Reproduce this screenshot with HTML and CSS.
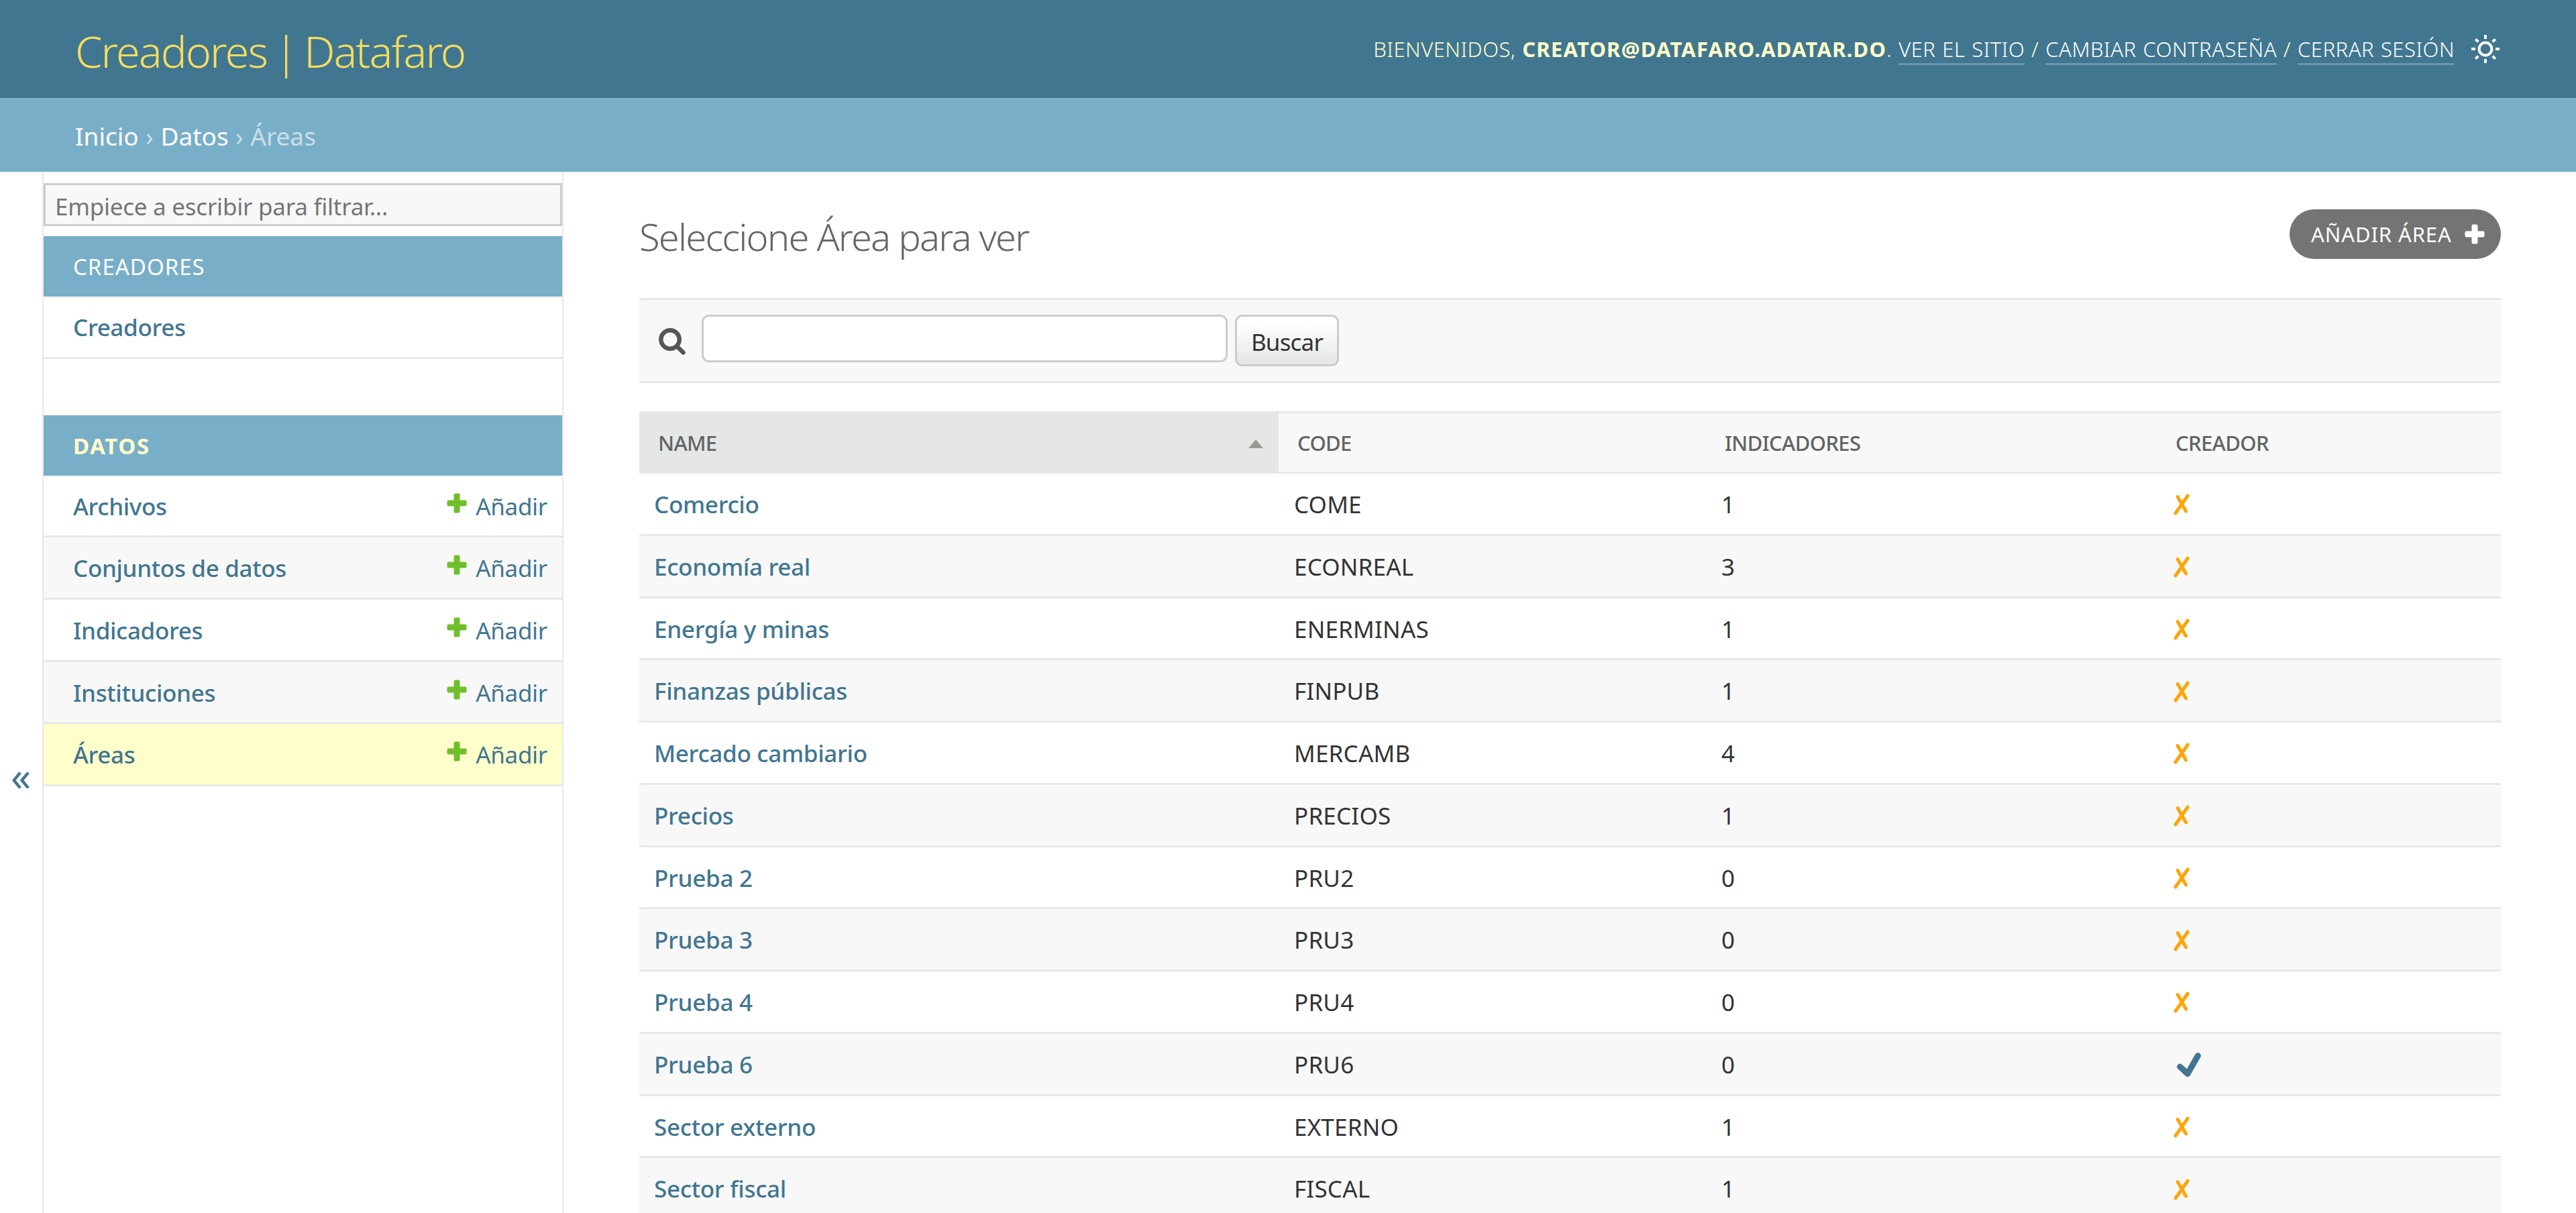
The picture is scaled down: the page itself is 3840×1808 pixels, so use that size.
FILE: index.html
```html
<!DOCTYPE html>
<html lang="es">
<head>
<meta charset="utf-8">
<title>Seleccione Área para ver | Datafaro</title>
<link rel="stylesheet" href="styles.css">
</head>
<body>
<svg class="defs" aria-hidden="true">
  <symbol id="plus" viewBox="0 0 30 30"><path d="M12.500 2.500h5v10h10v5h-10v10h-5v-10h-10v-5h10z" fill="currentColor" stroke="currentColor" stroke-width="4" stroke-linejoin="round"/></symbol>
  <symbol id="no" viewBox="0 0 24 32"><path d="M6.2 4.5 18.6 26M21.2 3 3 29" stroke="currentColor" stroke-width="5" stroke-linecap="round"/></symbol>
  <symbol id="yes" viewBox="0 0 36 36"><path d="M4.6 21 16 31.4 31.4 4.6" fill="none" stroke="currentColor" stroke-width="9" stroke-linecap="round" stroke-linejoin="round"/></symbol>
</svg>

<header class="header">
  <h1 class="brand">Creadores | Datafaro</h1>
  <div class="user-tools">
    <span>Bienvenidos, <strong>creator@datafaro.adatar.do</strong>. <a>Ver el sitio</a> / <a>Cambiar contraseña</a> / <a>Cerrar sesión</a></span>
    <svg class="sun" viewBox="0 0 42 42"><circle cx="21" cy="21" r="9.4"/><path d="M21 0v6M21 36V42M0 21h6M36 21H42M6.300 6.300l4 4M31.700 31.700l4 4M6.300 35.700l4-4M31.700 10.300l4-4"/></svg>
  </div>
</header>

<nav class="breadcrumbs"><a>Inicio</a> › <a>Datos</a> › Áreas</nav>

<div class="main">
  <button class="toggle">«</button>
  <aside class="sidebar">
    <input class="filter" type="text" placeholder="Empiece a escribir para filtrar...">
    <section class="module">
      <h2 class="caption">Creadores</h2>
      <div class="item"><a class="model">Creadores</a></div>
    </section>
    <section class="module">
      <h2 class="caption current">Datos</h2>
      <div class="item"><a class="model">Archivos</a><a class="add"><svg><use href="#plus"/></svg>Añadir</a></div>
      <div class="item"><a class="model">Conjuntos de datos</a><a class="add"><svg><use href="#plus"/></svg>Añadir</a></div>
      <div class="item"><a class="model">Indicadores</a><a class="add"><svg><use href="#plus"/></svg>Añadir</a></div>
      <div class="item"><a class="model">Instituciones</a><a class="add"><svg><use href="#plus"/></svg>Añadir</a></div>
      <div class="item selected"><a class="model">Áreas</a><a class="add"><svg><use href="#plus"/></svg>Añadir</a></div>
    </section>
  </aside>

  <main class="content">
    <div class="title-row">
      <h1 class="title">Seleccione Área para ver</h1>
      <a class="add-button">Añadir Área<svg><use href="#plus"/></svg></a>
    </div>
    <form class="search">
      <svg class="lens" viewBox="0 0 40 40"><circle cx="17" cy="17" r="13.700"/><path d="M27 27l9.500 9.500"/></svg>
      <input class="query" type="text">
      <button class="submit" type="button">Buscar</button>
    </form>
    <div class="results">
      <div class="row head">
        <div class="sorted">Name<i class="arrow"></i></div><div>Code</div><div>Indicadores</div><div>Creador</div>
      </div>
      <div class="row"><a>Comercio</a><span>COME</span><span>1</span><svg class="no"><use href="#no"/></svg></div>
      <div class="row"><a>Economía real</a><span>ECONREAL</span><span>3</span><svg class="no"><use href="#no"/></svg></div>
      <div class="row"><a>Energía y minas</a><span>ENERMINAS</span><span>1</span><svg class="no"><use href="#no"/></svg></div>
      <div class="row"><a>Finanzas públicas</a><span>FINPUB</span><span>1</span><svg class="no"><use href="#no"/></svg></div>
      <div class="row"><a>Mercado cambiario</a><span>MERCAMB</span><span>4</span><svg class="no"><use href="#no"/></svg></div>
      <div class="row"><a>Precios</a><span>PRECIOS</span><span>1</span><svg class="no"><use href="#no"/></svg></div>
      <div class="row"><a>Prueba 2</a><span>PRU2</span><span>0</span><svg class="no"><use href="#no"/></svg></div>
      <div class="row"><a>Prueba 3</a><span>PRU3</span><span>0</span><svg class="no"><use href="#no"/></svg></div>
      <div class="row"><a>Prueba 4</a><span>PRU4</span><span>0</span><svg class="no"><use href="#no"/></svg></div>
      <div class="row"><a>Prueba 6</a><span>PRU6</span><span>0</span><svg class="yes"><use href="#yes"/></svg></div>
      <div class="row"><a>Sector externo</a><span>EXTERNO</span><span>1</span><svg class="no"><use href="#no"/></svg></div>
      <div class="row"><a>Sector fiscal</a><span>FISCAL</span><span>1</span><svg class="no"><use href="#no"/></svg></div>
    </div>
  </main>
</div>
</body>
</html>
```

FILE: styles.css
```css
* { box-sizing: border-box; }

html, body { height: 100%; }

body {
  margin: 0;
  display: flex;
  flex-direction: column;
  overflow: hidden;
  background: #fff;
  color: #333;
  font: 380 35px/1.362 "Noto Sans", "Open Sans", sans-serif;
}

h1, h2 { margin: 0; }
.defs { position: absolute; width: 0; height: 0; }

/* Header */
.header {
  flex: none;
  height: 146px;
  padding: 0 112px;
  display: flex;
  align-items: center;
  justify-content: space-between;
  background: #417690;
  color: #ffc;
}
.brand {
  padding-top: 7px;
  font-size: 65px;
  font-weight: 300;
  letter-spacing: -1.950px;
  word-spacing: -4px;
  color: #f5dd5d;
}
.user-tools {
  display: flex;
  align-items: center;
  gap: 25px;
  font-size: 31px;
  font-weight: 300;
  letter-spacing: 0.500px;
  word-spacing: 1.300px;
  text-transform: uppercase;
}
.user-tools strong { font-weight: 700; letter-spacing: 1.200px; }
.user-tools a {
  color: #fff;
  border-bottom: 3px solid #6a97ae;
}
.sun {
  width: 42px;
  height: 42px;
  margin-right: 2px;
  fill: none;
  stroke: #fff;
  stroke-width: 4;
}

.breadcrumbs {
  flex: none;
  height: 110px;
  padding: 3px 112px 0;
  background: #79aec8;
  color: #c9dfe8;
  font-size: 37px;
  line-height: 108px;
  word-spacing: 1px;
}
.breadcrumbs a { color: #fff; }

/* Page body */
.main { flex: 1; min-height: 0; display: flex; }

.toggle {
  width: 63px;
  padding: 247px 1px 0 0;
  border: 0;
  background: none;
  color: #417690;
  font: 400 60px/1 "Noto Sans", sans-serif;
}

.sidebar {
  width: 777px;
  padding-top: 17px;
  border: solid #e8e8e8;
  border-width: 0 2px;
}
.filter {
  display: block;
  width: 100%;
  height: 64px;
  margin-bottom: 15px;
  padding: 4px 14px 0;
  border: 3px solid #ccc;
  background: #f8f8f8;
  font: 380 35px "Noto Sans", sans-serif;
  letter-spacing: -0.250px;
}
.filter::placeholder { color: #757575; opacity: 1; }

.module { margin-bottom: 84px; }
.caption {
  height: 90px;
  padding-left: 44px;
  background: #79aec8;
  color: #fff;
  font-size: 33px;
  font-weight: 400;
  line-height: 92px;
  letter-spacing: 1px;
  text-transform: uppercase;
}
.current { color: #ffc; font-weight: 700; letter-spacing: 1.600px; }
.item {
  height: 92.700px;
  padding: 2px 22px 0 44px;
  display: flex;
  align-items: center;
  justify-content: space-between;
  border-bottom: 3px solid #e8e8e8;
}
.item:nth-child(odd) { background: #f8f8f8; }
.item.selected { background: #ffc; }
.model { color: #417690; font-weight: 550; letter-spacing: -0.350px; }
.add { display: flex; gap: 13px; color: #417690; letter-spacing: -0.300px; }
.add svg { width: 30px; height: 30px; margin-top: 4px; color: #70bf2b; }

/* Change list */
.content { flex: 1; padding: 56px 112px 0 113px; }
.title-row { height: 132px; display: flex; justify-content: space-between; align-items: flex-start; }
.title {
  padding-top: 2px;
  font-size: 56px;
  font-weight: 300;
  letter-spacing: -1.750px;
  color: #666;
}
.add-button {
  width: 315px;
  height: 74px;
  padding: 0 24px 0 32px;
  display: flex;
  align-items: center;
  justify-content: space-between;
  border-radius: 37px;
  background: #747474;
  color: #fff;
  font-size: 31px;
  letter-spacing: 0.900px;
  text-transform: uppercase;
}
.add-button svg { width: 30px; height: 30px; }

.search {
  height: 127px;
  margin-bottom: 42px;
  padding: 22px 29px;
  display: flex;
  align-items: flex-start;
  border: solid #e8e8e8;
  border-width: 3px 0;
  background: #f8f8f8;
}
.lens {
  width: 40px;
  height: 40px;
  margin: 20px 24px 0 0;
  fill: none;
  stroke: #555;
  stroke-width: 6.400;
  stroke-linecap: round;
}
.query {
  width: 784px;
  height: 71px;
  margin-right: 11px;
  border: 3px solid #ccc;
  border-radius: 11px;
  background: #fff;
}
.submit {
  width: 155px;
  height: 77px;
  padding: 4px 0 0;
  border: 3px solid #ccc;
  border-radius: 11px;
  background: linear-gradient(#fff 15%, #e4e6e6);
  color: #333;
  font: 380 35px "Noto Sans", sans-serif;
  letter-spacing: -0.800px;
}

.results { border-top: 3px solid #e8e8e8; }
.row {
  height: 92.750px;
  padding-top: 2px;
  display: grid;
  grid-template-columns: 953px 637px 672px 1fr;
  align-items: center;
  border-bottom: 3px solid #e8e8e8;
}
.row > * { margin-left: 22px; }
.row:nth-child(odd) { background: #f8f8f8; }
.row a { color: #417690; font-weight: 550; letter-spacing: -0.300px; }
.row span { margin-left: 23px; letter-spacing: 0.200px; }
.row svg { color: #ffa408; }
.row .no { width: 24px; height: 32px; margin: 1px 0 0 25px; }
.row .yes { width: 36px; height: 36px; margin-left: 30px; color: #417690; }

.row.head {
  height: 90px;
  padding-top: 0;
  color: #5f6563;
  font-size: 31px;
  font-weight: 550;
  letter-spacing: -0.650px;
  text-transform: uppercase;
}
.row.head > div {
  height: 87px;
  margin: 0;
  padding: 1px 23px 0 28px;
  display: flex;
  align-items: center;
  justify-content: space-between;
}
.row.head > .sorted { background: #e4e7e6; }
.arrow {
  margin-top: 2px;
  border: 11px solid transparent;
  border-top: 0;
  border-bottom: 13px solid #999b93;
}
```
